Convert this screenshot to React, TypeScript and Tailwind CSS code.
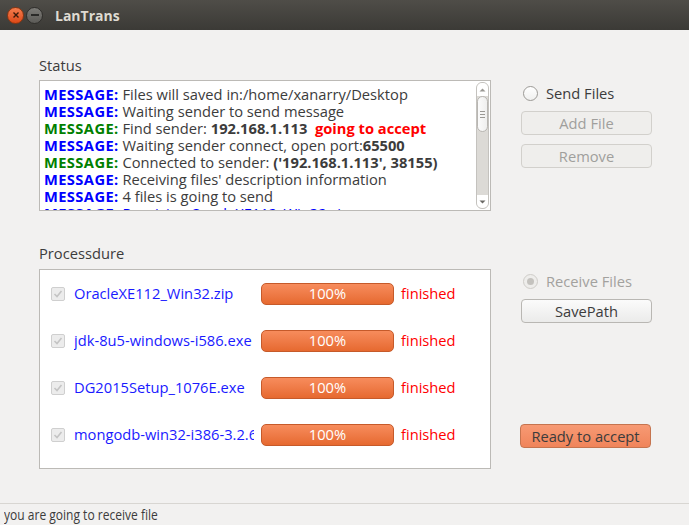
import React from "react";

const FONT = { fontFamily: '"Open Sans", "Noto Sans", sans-serif' };

function Msg({ color, children }: { color: "blue" | "green"; children: React.ReactNode }) {
  return (
    <div className="whitespace-nowrap leading-[17px] h-[17px] text-[#3c3c3c]">
      <span className={`font-bold tracking-[0.4px] ${color === "blue" ? "text-[#0000ff]" : "text-[#008000]"}`}>MESSAGE:</span> {children}
    </div>
  );
}

function Row({ name }: { name: string }) {
  return (
    <div className="flex items-center h-[47px]">
      <div className="w-[14px] h-[14px] ml-[11px] rounded-[2px] border border-[#cfcfcf] bg-[#ececec] flex items-center justify-center">
        <svg width="10" height="10" viewBox="0 0 10 10">
          <path d="M1.5 5 L4 7.5 L8.5 2" stroke="#c4c4c4" strokeWidth="1.6" fill="none" />
        </svg>
      </div>
      <div className="ml-[9px] w-[180px] overflow-hidden whitespace-nowrap text-[#1a1aff] text-[14.7px]">{name}</div>
      <div className="ml-[7px] w-[133px] h-[22px] rounded-[5px] border border-[#c65a2a] bg-gradient-to-b from-[#f78c5c] to-[#e6692f] flex items-center justify-center text-white text-[14.7px]">
        100%
      </div>
      <div className="ml-[7px] text-[#ff0000] text-[14.7px]">finished</div>
    </div>
  );
}

function Btn({ children, disabled, accent }: { children: React.ReactNode; disabled?: boolean; accent?: boolean }) {
  if (accent)
    return (
      <div className="w-[131px] h-[24px] rounded-[4px] border border-[#c5744f] bg-gradient-to-b from-[#f79a74] to-[#f0845a] flex items-center justify-center text-[14.7px] text-[#3c3c3c]">
        {children}
      </div>
    );
  return (
    <div
      className={`w-[131px] h-[24px] rounded-[4px] border ${disabled ? "border-[#d2d0cc] bg-[#efeeec] text-[#a09f9c]" : "border-[#b9b7b3] bg-gradient-to-b from-[#fbfbfb] to-[#ebebea] text-[#3c3c3c]"} flex items-center justify-center text-[14.7px]`}
    >
      {children}
    </div>
  );
}

export default function App() {
  return (
    <div className="w-[689px] h-[525px] bg-[#f2f1f0] flex flex-col overflow-hidden text-[14.7px] text-[#3c3c3c]" style={FONT}>
      {/* title bar */}
      <div className="h-[30px] bg-gradient-to-b from-[#4f4d48] to-[#3b3a36] flex items-center shrink-0">
        <div className="ml-[7px] w-[17px] h-[17px] rounded-full bg-gradient-to-b from-[#f47c4c] to-[#dd4814] border border-[#8c3510] flex items-center justify-center">
          <svg width="8" height="8" viewBox="0 0 8 8">
            <path d="M1.5 1.5 L6.5 6.5 M6.5 1.5 L1.5 6.5" stroke="#3a1a0a" strokeWidth="1.4" />
          </svg>
        </div>
        <div className="ml-[2px] w-[17px] h-[17px] rounded-full bg-gradient-to-b from-[#7c7b77] to-[#5c5b57] border border-[#2f2e2b] flex items-center justify-center">
          <div className="w-[8px] h-[1.5px] bg-[#2a2a28]" />
        </div>
        <div className="ml-[12px] font-bold text-[14px] text-[#dfdbd2]">LanTrans</div>
      </div>

      <div className="flex-1 flex">
        {/* left column */}
        <div className="ml-[39px] w-[452px] flex flex-col">
          <div className="mt-[25px] h-[25px] leading-[20px]">Status</div>
          <div className="h-[131px] bg-white border border-[#bcbab6] flex">
            <div className="flex-1 overflow-hidden pl-[4px] pt-[5px]">
              <Msg color="blue">Files will saved in:/home/xanarry/Desktop</Msg>
              <Msg color="blue">Waiting sender to send message</Msg>
              <Msg color="green">
                Find sender: <b>192.168.1.113</b>&nbsp; <b className="text-[#ff0000]">going to accept</b>
              </Msg>
              <Msg color="blue">
                Waiting sender connect, open port:<b>65500</b>
              </Msg>
              <Msg color="green">
                Connected to sender: <b>('192.168.1.113', 38155)</b>
              </Msg>
              <Msg color="blue">Receiving files' description information</Msg>
              <Msg color="blue">4 files is going to send</Msg>
              <div className="whitespace-nowrap leading-[17px] text-[#0000ff]">
                <b className="tracking-[0.4px]">MESSAGE:</b> Receiving OracleXE112_Win32.zip
              </div>
            </div>
            {/* scrollbar */}
            <div className="w-[14px] mr-[1px] my-[1px] flex flex-col items-center">
              <div className="w-[13px] h-full rounded-[6px] border border-[#c4c2be] bg-[#dcdad6] flex flex-col items-center overflow-hidden">
                <div className="h-[13px] w-full bg-white flex items-center justify-center">
                  <svg width="7" height="4" viewBox="0 0 7 4"><path d="M0.5 3.5 L3.5 0.5 L6.5 3.5" fill="#9a9894" /></svg>
                </div>
                <div className="w-full h-[36px] rounded-[6px] border border-[#b8b6b2] bg-gradient-to-r from-[#fbfbfb] to-[#efefee] flex flex-col items-center justify-center gap-[2px]">
                  <div className="w-[5px] h-[1px] bg-[#9a9894]" />
                  <div className="w-[5px] h-[1px] bg-[#9a9894]" />
                  <div className="w-[5px] h-[1px] bg-[#9a9894]" />
                </div>
                <div className="flex-1" />
                <div className="h-[13px] w-full bg-white flex items-center justify-center">
                  <svg width="7" height="4" viewBox="0 0 7 4"><path d="M0.5 0.5 L3.5 3.5 L6.5 0.5" fill="#6a6864" /></svg>
                </div>
              </div>
            </div>
          </div>

          <div className="mt-[32px] h-[26px] leading-[20px]">Processdure</div>
          <div className="h-[200px] bg-white border border-[#bcbab6]">
            <Row name="OracleXE112_Win32.zip" />
            <Row name="jdk-8u5-windows-i586.exe" />
            <Row name="DG2015Setup_1076E.exe" />
            <Row name="mongodb-win32-i386-3.2.6-signed.msi" />
          </div>
        </div>

        {/* right column */}
        <div className="ml-[30px] w-[131px] flex flex-col">
          <div className="mt-[55px] h-[17px] flex items-center">
            <div className="ml-[2px] w-[15px] h-[15px] rounded-full border border-[#9c9a96] bg-gradient-to-b from-white to-[#f0f0ef]" />
            <div className="ml-[8px]">Send Files</div>
          </div>
          <div className="mt-[9px]">
            <Btn disabled>Add File</Btn>
          </div>
          <div className="mt-[9px]">
            <Btn disabled>Remove</Btn>
          </div>
          <div className="mt-[105px] h-[17px] flex items-center">
            <div className="ml-[2px] w-[15px] h-[15px] rounded-full border border-[#cfcdc9] bg-[#eeedeb] flex items-center justify-center">
              <div className="w-[7px] h-[7px] rounded-full bg-[#c4c2be]" />
            </div>
            <div className="ml-[8px] text-[#a3a19e]">Receive Files</div>
          </div>
          <div className="mt-[9px]">
            <Btn>SavePath</Btn>
          </div>
          <div className="mt-[101px] -ml-[1px]">
            <Btn accent>Ready to accept</Btn>
          </div>
        </div>
      </div>

      {/* status bar */}
      <div className="h-[22px] shrink-0 border-t border-[#d8d6d2] flex items-center pl-[4px] text-[14.5px] text-[#3c3c3c]">
        <span className="inline-block origin-left scale-x-[0.83] whitespace-nowrap">you are going to receive file</span>
      </div>
    </div>
  );
}
